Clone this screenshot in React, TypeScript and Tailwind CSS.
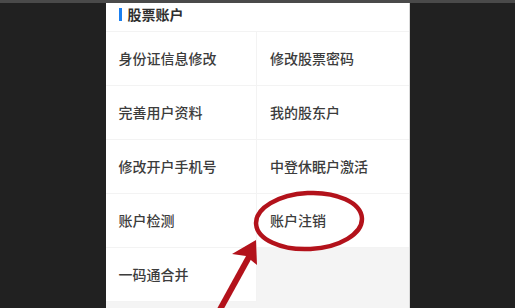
const items = [
  "身份证信息修改",
  "修改股票密码",
  "完善用户资料",
  "我的股东户",
  "修改开户手机号",
  "中登休眠户激活",
  "账户检测",
  "账户注销",
  "一码通合并",
];

function Annotation() {
  return (
    <svg
      className="pointer-events-none absolute inset-0"
      width="515"
      height="308"
      viewBox="0 0 515 308"
    >
      <ellipse
        cx="309"
        cy="218"
        rx="53"
        ry="28"
        fill="none"
        stroke="#b3121b"
        strokeWidth="4.5"
        transform="rotate(-3 309 218)"
      />
      <path d="M217 312 L250 252" stroke="#b3121b" strokeWidth="6" fill="none" />
      <path d="M256 237 L232 251 L246 253 L257 262 Z" fill="#b3121b" />
    </svg>
  );
}

export default function App() {
  return (
    <div
      className="relative h-[308px] w-[515px] overflow-hidden border-t-[3px] border-[#4a4a4a] bg-[#212121]"
      style={{ fontFamily: '"Noto Sans CJK SC", "Noto Sans", sans-serif' }}
    >
      <div className="mx-auto flex h-full w-[304px] flex-col border-r border-[#d9d9d9] bg-[#f4f4f4]">
        <div className="flex h-[29px] shrink-0 items-center gap-[6px] border-b border-[#f3f3f3] bg-white pb-[5px] pl-[13px]">
          <span className="h-[13px] w-[3px] bg-[#1a7ff0]" />
          <span className="text-[14px] font-bold text-[#2e2e2e]">股票账户</span>
        </div>
        <div className="grid grid-cols-2">
          {items.map((label, i) => (
            <div
              key={label}
              className={
                i % 2 === 0
                  ? "flex h-[54px] items-center border-b border-r border-[#f3f3f3] bg-white pl-[13px] text-[14px] font-medium text-[#3c3c3c]"
                  : "flex h-[54px] items-center border-b border-[#f3f3f3] bg-white pl-[13px] text-[14px] font-medium text-[#3c3c3c]"
              }
            >
              {label}
            </div>
          ))}
        </div>
      </div>
      <Annotation />
    </div>
  );
}
